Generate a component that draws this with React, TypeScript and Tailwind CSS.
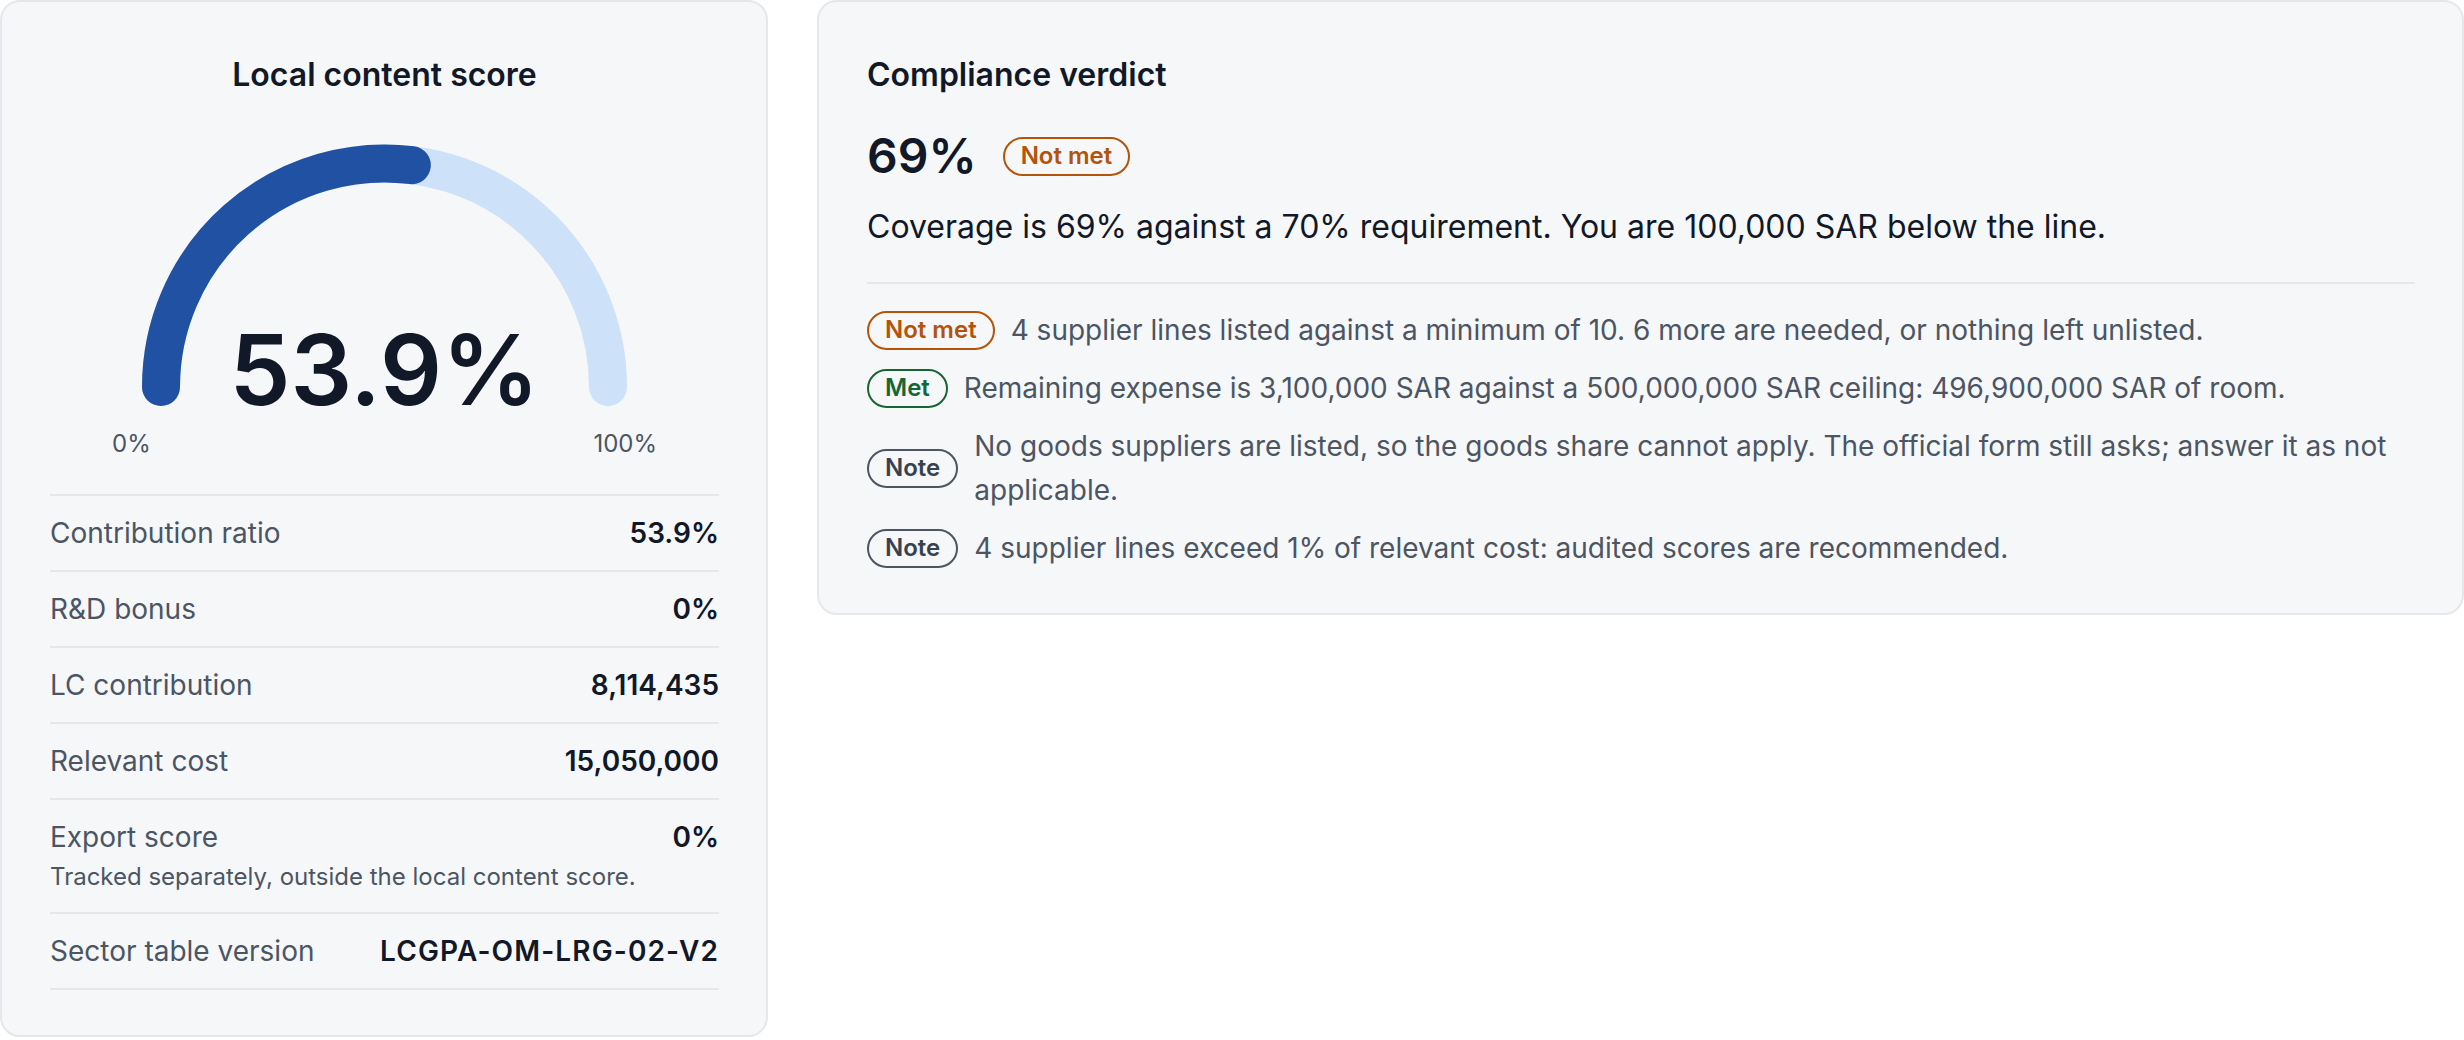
import React from "react";

type Row = { label: string; value: string; note?: string; code?: boolean };

const rows: Row[] = [
  { label: "Contribution ratio", value: "53.9%" },
  { label: "R&D bonus", value: "0%" },
  { label: "LC contribution", value: "8,114,435" },
  { label: "Relevant cost", value: "15,050,000" },
  {
    label: "Export score",
    value: "0%",
    note: "Tracked separately, outside the local content score.",
  },
  { label: "Sector table version", value: "LCGPA-OM-LRG-02-V2", code: true },
];

type Tone = "bad" | "good" | "note";

const findings: { tone: Tone; text: string }[] = [
  {
    tone: "bad",
    text: "4 supplier lines listed against a minimum of 10. 6 more are needed, or nothing left unlisted.",
  },
  {
    tone: "good",
    text: "Remaining expense is 3,100,000 SAR against a 500,000,000 SAR ceiling: 496,900,000 SAR of room.",
  },
  {
    tone: "note",
    text: "No goods suppliers are listed, so the goods share cannot apply. The official form still asks; answer it as not applicable.",
  },
  {
    tone: "note",
    text: "4 supplier lines exceed 1% of relevant cost: audited scores are recommended.",
  },
];

function Badge({ tone }: { tone: Tone }) {
  const label = tone === "bad" ? "Not met" : tone === "good" ? "Met" : "Note";
  const cls =
    tone === "bad"
      ? "border-[#b45309] text-[#b45309]"
      : tone === "good"
        ? "border-[#166534] text-[#166534]"
        : "border-[#4b5563] text-[#374151]";
  return (
    <span
      className={`inline-flex h-[39px] shrink-0 items-center rounded-full border-2 px-[16px] text-[24px] font-semibold leading-none ${cls}`}
    >
      {label}
    </span>
  );
}

function Gauge({ value }: { value: number }) {
  const w = 545;
  const cx = w / 2;
  const cy = 272;
  const r = 223.5;
  const a = Math.PI * (value / 100);
  const ex = cx - r * Math.cos(a);
  const ey = cy - r * Math.sin(a);
  return (
    <div className="relative h-[295px] w-[545px]">
      <svg width={w} height="295" viewBox={`0 0 ${w} 295`}>
        <path
          d={`M ${cx - r} ${cy} A ${r} ${r} 0 0 1 ${cx + r} ${cy}`}
          fill="none"
          stroke="#cde1f9"
          strokeWidth="38"
          strokeLinecap="round"
        />
        <path
          d={`M ${cx - r} ${cy} A ${r} ${r} 0 0 1 ${ex} ${ey}`}
          fill="none"
          stroke="#2151a2"
          strokeWidth="38"
          strokeLinecap="round"
        />
      </svg>
      <div className="absolute left-0 right-0 top-[206px] text-center text-[97px] font-semibold leading-none text-[#111827]">
        {value}%
      </div>
    </div>
  );
}

export default function App() {
  return (
    <div className="flex min-h-screen items-start gap-[49px] bg-white font-['Inter',sans-serif]">
      {/* Score card */}
      <section className="w-[768px] shrink-0 rounded-[20px] border-2 border-[#e4e7eb] bg-[#f6f7f9] pb-[45px] pl-[48px] pr-[47px] pt-[49px]">
        <h2 className="text-center text-[32px] font-semibold leading-[48px] text-[#111827]">
          Local content score
        </h2>
        <div className="mt-[16px] flex flex-col items-center">
          <Gauge value={53.9} />
          <div className="mt-[16px] flex w-[545px] justify-between text-[24px] leading-[35px] text-[#4b5563]">
            <span>0%</span>
            <span>100%</span>
          </div>
        </div>
        <div className="mt-[33px] border-t-2 border-[#e5e7eb]">
          {rows.map((r) => (
            <div
              key={r.label}
              className="flex items-start justify-between border-b-2 border-[#e5e7eb] py-[16px]"
            >
              <div>
                <div className="text-[28px] leading-[42px] text-[#4b5563]">{r.label}</div>
                {r.note && (
                  <div className="text-[24px] leading-[38px] text-[#4b5563]">{r.note}</div>
                )}
              </div>
              <div
                className={`text-[28px] font-semibold leading-[42px] text-[#111827] ${
                  r.code ? "tracking-[0.04em]" : ""
                }`}
              >
                {r.value}
              </div>
            </div>
          ))}
        </div>
      </section>

      {/* Verdict card */}
      <section className="flex-1 rounded-[20px] border-2 border-[#e4e7eb] bg-[#f6f7f9] pb-[43px] pl-[48px] pr-[47px] pt-[49px]">
        <h2 className="text-[32px] font-semibold leading-[48px] text-[#111827]">
          Compliance verdict
        </h2>
        <div className="mt-[33px] flex items-center gap-[26px]">
          <span className="text-[48px] font-semibold leading-[48px] text-[#111827]">69%</span>
          <Badge tone="bad" />
        </div>
        <p className="mt-[24px] text-[32px] leading-[45px] text-[#111827]">
          Coverage is 69% against a 70% requirement. You are 100,000 SAR below the line.
        </p>
        <div className="mt-[33px] border-t-2 border-[#e5e7eb] pt-[24px]">
          <ul className="flex flex-col gap-[14px]">
            {findings.map((f, i) => (
              <li key={i} className="flex items-center gap-[16px]">
                <Badge tone={f.tone} />
                <span className="text-[28px] leading-[44px] text-[#4b5563]">{f.text}</span>
              </li>
            ))}
          </ul>
        </div>
      </section>
    </div>
  );
}
